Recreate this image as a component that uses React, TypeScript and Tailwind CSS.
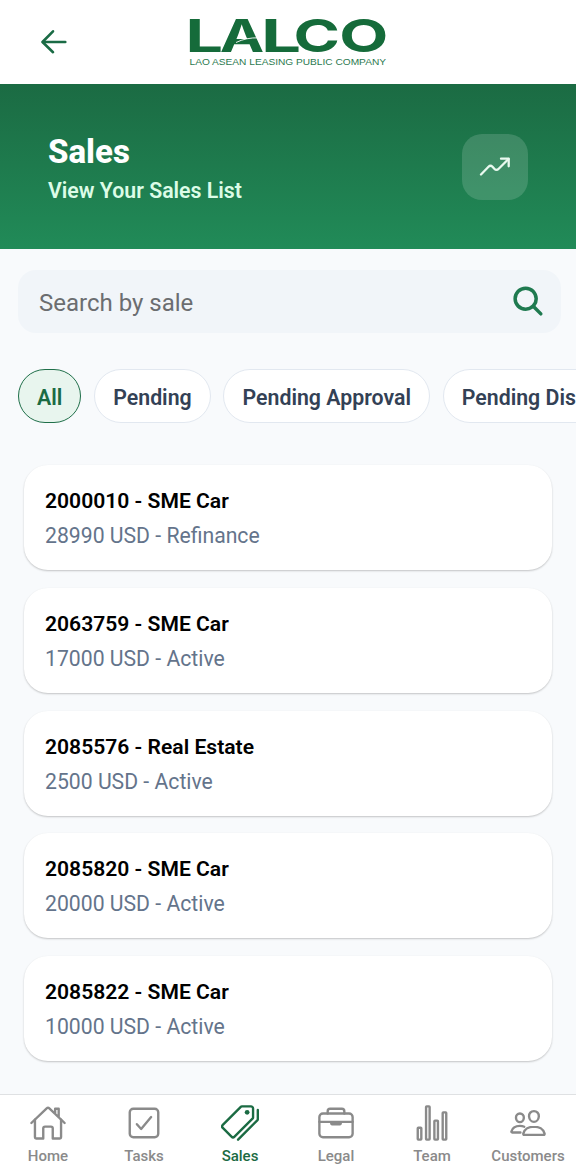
import React from 'react';
import {
  IoBriefcaseOutline,
  IoCheckboxOutline,
  IoHomeOutline,
  IoPeopleOutline,
  IoPricetagsOutline,
  IoSearch,
  IoStatsChartOutline,
} from 'react-icons/io5';

const filters = ['All', 'Pending', 'Pending Approval', 'Pending Disbursement'];

const sales = [
  { id: '2000010', type: 'SME Car', amount: '28990 USD', status: 'Refinance' },
  { id: '2063759', type: 'SME Car', amount: '17000 USD', status: 'Active' },
  { id: '2085576', type: 'Real Estate', amount: '2500 USD', status: 'Active' },
  { id: '2085820', type: 'SME Car', amount: '20000 USD', status: 'Active' },
  { id: '2085822', type: 'SME Car', amount: '10000 USD', status: 'Active' },
];

const tabs = [
  { label: 'Home', icon: IoHomeOutline },
  { label: 'Tasks', icon: IoCheckboxOutline },
  { label: 'Sales', icon: IoPricetagsOutline },
  { label: 'Legal', icon: IoBriefcaseOutline },
  { label: 'Team', icon: IoStatsChartOutline },
  { label: 'Customers', icon: IoPeopleOutline },
];

const Logo = () => (
  <svg width="204" height="72" viewBox="186 6 204 72" fill="#156b3a" className="overflow-visible">
    <g fontFamily="Inter, sans-serif" fontWeight="650" fontSize="45.5">
      <text transform="translate(185.4 51.6) scale(1.46 1)">L</text>
      <text transform="translate(219.8 51.6) scale(1.31 1)">A</text>
      <text transform="translate(261 51.6) scale(1.56 1)">L</text>
      <text transform="translate(293.5 51.6) scale(1.38 1)">C</text>
      <text transform="translate(339.3 51.6) scale(1.4 1)">O</text>
    </g>
    {/* swoosh through the crossbar of the A */}
    <path d="M236 42.5 Q246 37.5 259 37.8" fill="none" stroke="#fff" strokeWidth="0.9" />
    <text
      x="189.5"
      y="65.3"
      fontFamily="Liberation Sans, sans-serif"
      fontSize="9.8"
      fill="#2c7a50"
      textLength="196.5"
      lengthAdjust="spacingAndGlyphs"
    >
      LAO ASEAN LEASING PUBLIC COMPANY
    </text>
  </svg>
);

const BackIcon = () => (
  <svg
    width="30"
    height="30"
    viewBox="0 0 30 30"
    fill="none"
    stroke="#1a6b45"
    strokeWidth="2.6"
    strokeLinecap="round"
    strokeLinejoin="round"
  >
    <path d="M14 4.3 L3.5 15 L14 25.2" />
    <path d="M4 15 H26.3" />
  </svg>
);

const TrendIcon = () => (
  <svg
    width="32"
    height="22"
    viewBox="0 0 32 22"
    fill="none"
    stroke="#e9f9ef"
    strokeWidth="2.3"
    strokeLinecap="round"
    strokeLinejoin="round"
  >
    <path d="M2 18.5 L9.5 10.8 Q11.5 8.8 13.5 10.8 L15.3 12.8 Q17.5 15.1 19.7 12.8 L29.5 3" />
    <path d="M22 2.7 H29.7 V10.3" />
  </svg>
);

const Header = () => (
  <header className="flex h-[84px] shrink-0 items-center bg-white pl-[39px]">
    <BackIcon />
    <div className="ml-[117px]">
      <Logo />
    </div>
  </header>
);

const Banner = () => (
  <section className="flex h-[165px] shrink-0 items-center justify-between bg-gradient-to-b from-[#1b6b43] to-[#218b58] px-12">
    <div className="pt-1">
      <h1 className="text-[33px] leading-[40px] font-extrabold text-white">Sales</h1>
      <p className="mt-[5px] text-[21.3px] leading-[28px] font-semibold text-[#dcfce7]">View Your Sales List</p>
    </div>
    <div className="flex h-[66px] w-[66px] items-center justify-center rounded-[20px] bg-white/15">
      <TrendIcon />
    </div>
  </section>
);

const SearchBar = () => (
  <div className="mt-[21px] mr-[15px] ml-[18px] flex h-[63px] shrink-0 items-center justify-between rounded-[18px] bg-[#f1f5f9] pr-4 pl-[21px]">
    <span className="pt-0.5 text-[24px] text-[#6b6d70]">Search by sale</span>
    <IoSearch size={36} className="-mr-px mb-px text-[#1f7a50]" />
  </div>
);

const FilterChips = () => (
  <div className="mt-9 flex shrink-0 gap-[12.7px] overflow-hidden pl-[18px]">
    {filters.map((name, index) => (
      <button
        key={name}
        className={`h-[54px] shrink-0 rounded-full border px-[18.1px] pt-[3px] text-[21.3px] font-semibold whitespace-nowrap ${
          index === 0 ? 'border-[#1f6f49] bg-[#e8f5ee] text-[#1b6b43]' : 'border-[#e2e8f0] bg-white text-[#334155]'
        }`}
      >
        {name}
      </button>
    ))}
  </div>
);

const SalesList = () => (
  <main className="mt-[42px] flex flex-1 flex-col gap-[17.8px] px-6">
    {sales.map((sale) => (
      <div
        key={sale.id}
        className="h-[105px] rounded-[24px] bg-white px-[21px] pt-5 shadow-[0_1px_2px_rgba(0,0,0,0.22)]"
      >
        <div className="text-[21.1px] leading-[32px] font-semibold text-black">
          {sale.id} - {sale.type}
        </div>
        <div className="mt-0.5 text-[21.2px] leading-[34px] text-[#64748b]">
          {sale.amount} - {sale.status}
        </div>
      </div>
    ))}
  </main>
);

const TabBar = () => (
  <nav className="grid h-[81px] shrink-0 grid-cols-6 border-t border-[#dfe1e3] bg-white pt-[9px]">
    {tabs.map(({ label, icon: Icon }) => (
      <div
        key={label}
        className={`flex flex-col items-center ${label === 'Sales' ? 'text-[#1b6b43]' : 'text-[#8a8a8a]'}`}
      >
        <Icon size={38} />
        <span className="mt-1 text-[15px] leading-5 font-medium">{label}</span>
      </div>
    ))}
  </nav>
);

const App = () => {
  return (
    <div className="flex h-[1175px] w-[576px] flex-col overflow-hidden bg-[#f8fafc] font-[Roboto,sans-serif]">
      <Header />
      <Banner />
      <SearchBar />
      <FilterChips />
      <SalesList />
      <TabBar />
    </div>
  );
};

export default App;
